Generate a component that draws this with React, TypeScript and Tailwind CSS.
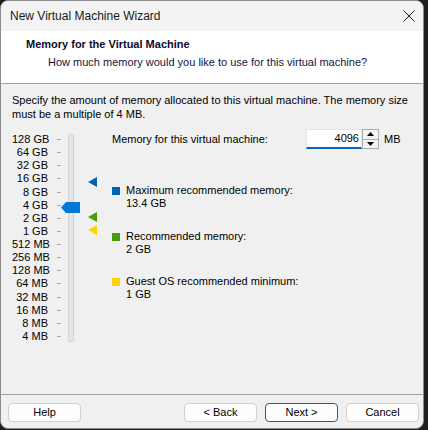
import React from 'react';

const scaleLabels = [
  '128 GB', '64 GB', '32 GB', '16 GB', '8 GB', '4 GB', '2 GB', '1 GB',
  '512 MB', '256 MB', '128 MB', '64 MB', '32 MB', '16 MB', '8 MB', '4 MB',
];

const legend = [
  { color: 'bg-[#0063b1]', label: 'Maximum recommended memory:', value: '13.4 GB', mt: 'mt-[35px]' },
  { color: 'bg-[#4a9a0a]', label: 'Recommended memory:', value: '2 GB', mt: 'mt-[20px]' },
  { color: 'bg-[#fcd400]', label: 'Guest OS recommended minimum:', value: '1 GB', mt: 'mt-[19px]' },
];

const Marker = ({ color, top }: { color: string; top: string }) => (
  <svg className={`absolute left-[76px] ${top}`} width="9" height="10" viewBox="0 0 9 10">
    <polygon points="0,5 9,0 9,10" fill={color} />
  </svg>
);

const Button = ({ label, primary }: { label: string; primary?: boolean }) => (
  <div
    className={`w-[73px] h-[19px] rounded-[4px] border bg-[#fdfdfd] flex items-center justify-center text-black ${
      primary ? 'border-[#0067c0]' : 'border-[#d0d0d0]'
    }`}
  >
    {label}
  </div>
);

export default function App() {
  return (
    <div className="w-[428px] h-[430px] bg-[#1f1f1f] font-['Liberation_Sans',sans-serif] text-[11px] text-black">
      <div className="w-[424px] h-[429px] rounded-lg border border-[#8c8c8c] bg-[#f0f0f0] overflow-hidden flex flex-col">
        {/* title bar */}
        <div className="h-[30px] bg-[#f3f3f3] flex items-center pl-[9px] pr-[4px] shrink-0">
          <span className="text-[12px] text-[#1a1a1a]">New Virtual Machine Wizard</span>
          <svg className="ml-auto mr-[4px]" width="12" height="12" viewBox="0 0 12 12">
            <path d="M0.5 0.5 L11.5 11.5 M11.5 0.5 L0.5 11.5" stroke="#1a1a1a" strokeWidth="1" />
          </svg>
        </div>

        {/* header */}
        <div className="h-[53px] bg-white border-b border-[#a0a0a0] shrink-0 pt-[6px]">
          <div className="pl-[25px] font-bold leading-[14px] text-[#0c0c2c]">Memory for the Virtual Machine</div>
          <div className="pl-[47px] mt-[4px] leading-[14px] text-[#14143c]">How much memory would you like to use for this virtual machine?</div>
        </div>

        {/* body */}
        <div className="h-[310px] shrink-0 pl-[11px] pt-[9px]">
          <div className="leading-[14px] whitespace-nowrap">
            Specify the amount of memory allocated to this virtual machine. The memory size
            <br />
            must be a multiple of 4 MB.
          </div>

          <div className="flex mt-[8px]">
            {/* slider */}
            <div className="relative w-[100px] h-[216px] flex shrink-0">
              <div className="mt-[4px] h-[210px] flex flex-col justify-between">
                {scaleLabels.map((l) => (
                  <div key={l} className="flex items-center h-[13px] leading-[13px]">
                    <span className="w-[36px] text-right whitespace-nowrap">{l}</span>
                    <span className="ml-[9px] w-[4px] h-px bg-[#a8a8a8]" />
                  </div>
                ))}
              </div>
              <div className="ml-[7px] mt-[5px] w-[6px] h-[208px] bg-[#e4e4e4] border border-[#d4d4d4] rounded-[1px]" />
              <svg className="absolute left-[49px] top-[73px]" width="19" height="11" viewBox="0 0 19 11">
                <polygon points="0,5.5 5,0 19,0 19,11 5,11" fill="#0078d4" />
              </svg>
              <Marker color="#0063b1" top="top-[48px]" />
              <Marker color="#4a9a0a" top="top-[83px]" />
              <Marker color="#fcd400" top="top-[96px]" />
            </div>

            {/* right panel */}
            <div className="flex flex-col">
              <div className="flex items-center h-[20px]">
                <span className="w-[194px]">Memory for this virtual machine:</span>
                <div className="w-[56px] h-[20px] bg-white border border-[#e5e5e5] border-b-2 border-b-[#0067c0] flex items-center justify-end pr-[2px]">
                  4096
                </div>
                <div className="w-[17px] h-[20px] border border-[#adadad] bg-[#f3f3f3] flex flex-col">
                  <div className="flex-1 flex items-center justify-center border-b border-[#adadad]">
                    <svg width="7" height="4" viewBox="0 0 7 4"><polygon points="0,4 3.5,0 7,4" fill="#000" /></svg>
                  </div>
                  <div className="flex-1 flex items-center justify-center">
                    <svg width="7" height="4" viewBox="0 0 7 4"><polygon points="0,0 7,0 3.5,4" fill="#000" /></svg>
                  </div>
                </div>
                <span className="ml-[5px]">MB</span>
              </div>

              {legend.map((g) => (
                <div key={g.label} className={`${g.mt} flex`}>
                  <span className={`w-[8px] h-[8px] mt-[3px] ${g.color}`} />
                  <div className="ml-[6px] leading-[13px]">
                    <div>{g.label}</div>
                    <div>{g.value}</div>
                  </div>
                </div>
              ))}
            </div>
          </div>
        </div>

        {/* footer */}
        <div className="border-t border-[#a0a0a0] pt-[8px] pl-[7px] flex">
          <Button label="Help" />
          <div className="ml-auto mr-[4px] flex gap-[8px]">
            <Button label="< Back" />
            <Button label="Next >" primary />
            <Button label="Cancel" />
          </div>
        </div>
      </div>
    </div>
  );
}
